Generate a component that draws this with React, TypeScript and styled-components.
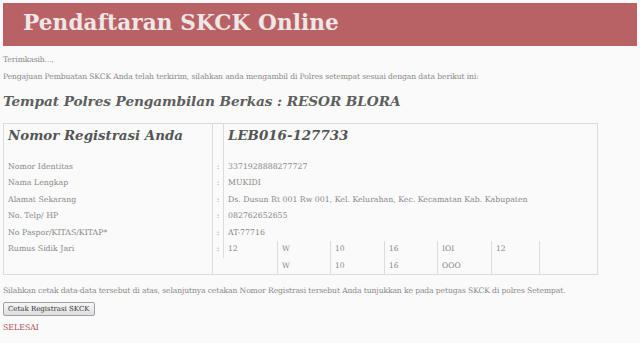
import styled, { createGlobalStyle } from 'styled-components';

const GlobalStyle = createGlobalStyle`
  html, body {
    margin: 0;
    padding: 0;
    background: #fafafa;
  }
  body {
    font-family: "DejaVu Serif", "Liberation Serif", serif;
  }
`;

const Page = styled.div`
  padding: 3px;
  width: 640px;
  height: 343px;
  box-sizing: border-box;
  overflow: hidden;
  color: #888;
  font-size: 8px;
`;

const Header = styled.header`
  height: 43px;
  background: #b86266;
  display: flex;
  align-items: center;
  padding: 0 0 4px 20px;
  box-sizing: border-box;
`;

const Title = styled.h1`
  margin: 0;
  font-family: "DejaVu Serif", serif;
  font-size: 21.6px;
  font-weight: bold;
  color: #efe6e6;
  letter-spacing: 0.1px;
`;

const Text = styled.p<{ $top: number }>`
  margin: ${({ $top }) => $top}px 0 0 0;
  line-height: 10px;
  font-size: 7.6px;
  color: #888;
  letter-spacing: -0.1px;
`;

const PickupTitle = styled.h2`
  margin: 10px 0 0 0;
  font-size: 13.7px;
  line-height: 18px;
  font-style: italic;
  font-weight: bold;
  color: #5e5e5e;
  letter-spacing: -0.1px;
`;

const DataTable = styled.table`
  margin-top: 13px;
  width: 595px;
  border: 1px solid #dcdcdc;
  border-collapse: collapse;
  table-layout: fixed;
`;

const Row = styled.tr<{ $height?: number }>`
  height: ${({ $height }) => $height ?? 16.5}px;
`;

const Cell = styled.td<{ $width?: number }>`
  width: ${({ $width }) => ($width ? `${$width}px` : 'auto')};
  padding: 0 4px;
  border-right: 1px solid #dcdcdc;
  font-size: 7.8px;
  line-height: 16.5px;
  color: #888;
  vertical-align: middle;
  white-space: nowrap;
  overflow: hidden;
  box-sizing: border-box;

  &:last-child {
    border-right: none;
  }
`;

const ColonCell = styled(Cell)`
  padding: 0;
  text-align: center;
`;

const BigCell = styled(Cell)`
  vertical-align: top;
  padding-top: 1px;
  font-size: 13.4px;
  line-height: 20px;
  font-style: italic;
  font-weight: bold;
  color: #555;
`;

const PrintsCell = styled.td`
  padding: 0;
  vertical-align: top;
`;

const PrintsGrid = styled.div`
  display: grid;
  grid-template-columns: 54px 53px 54px 53px 54px 48px 59px;
  grid-auto-rows: 16.5px;
`;

const PrintItem = styled.div`
  padding: 0 4px;
  border-right: 1px solid #dcdcdc;
  font-size: 7.6px;
  line-height: 16.5px;
  color: #888;

  &:nth-child(7n) {
    border-right: none;
  }
`;

const PrintButton = styled.button`
  margin-top: 6px;
  display: block;
  height: 14px;
  padding: 0 4px;
  font-family: "DejaVu Serif", serif;
  font-size: 7px;
  color: #333;
  background: linear-gradient(#f6f6f6, #dedede);
  border: 1px solid #a0a0a0;
  border-radius: 2px;
  cursor: pointer;
`;

const DoneLink = styled.span`
  display: block;
  margin-top: 7px;
  font-size: 7.8px;
  line-height: 10px;
  color: #b04c4e;
  cursor: pointer;
`;

const details = [
  { label: 'Nomor Identitas', value: '3371928888277727' },
  { label: 'Nama Lengkap', value: 'MUKIDI' },
  { label: 'Alamat Sekarang', value: 'Ds. Dusun Rt 001 Rw 001, Kel. Kelurahan, Kec. Kecamatan Kab. Kabupaten' },
  { label: 'No. Telp/ HP', value: '082762652655' },
  { label: 'No Paspor/KITAS/KITAP*', value: 'AT-77716' },
];

const fingerprints = ['12', 'W', '10', '16', 'IOI', '12', '', '', 'W', '10', '16', 'OOO', '', ''];

export default function App() {
  return (
    <>
      <GlobalStyle />
      <Page>
        <Header>
          <Title>Pendaftaran SKCK Online</Title>
        </Header>
        <Text $top={9}>Terimkasih...,</Text>
        <Text $top={7}>
          Pengajuan Pembuatan SKCK Anda telah terkirim, silahkan anda mengambil di Polres setempat sesuai dengan data berikut ini:
        </Text>
        <PickupTitle>Tempat Polres Pengambilan Berkas : RESOR BLORA</PickupTitle>
        <DataTable>
          <tbody>
            <Row $height={35}>
              <BigCell $width={209}>Nomor Registrasi Anda</BigCell>
              <ColonCell $width={11}></ColonCell>
              <BigCell>LEB016-127733</BigCell>
            </Row>
            {details.map((d, i) => (
              <Row key={i}>
                <Cell>{d.label}</Cell>
                <ColonCell>:</ColonCell>
                <Cell>{d.value}</Cell>
              </Row>
            ))}
            <Row>
              <Cell>Rumus Sidik Jari</Cell>
              <ColonCell>:</ColonCell>
              <PrintsCell rowSpan={2}>
                <PrintsGrid>
                  {fingerprints.map((f, i) => (
                    <PrintItem key={i}>{f}</PrintItem>
                  ))}
                </PrintsGrid>
              </PrintsCell>
            </Row>
            <Row>
              <Cell></Cell>
              <ColonCell></ColonCell>
            </Row>
          </tbody>
        </DataTable>
        <Text $top={11}>
          Silahkan cetak data-data tersebut di atas, selanjutnya cetakan Nomor Registrasi tersebut Anda tunjukkan ke pada petugas SKCK di polres Setempat.
        </Text>
        <PrintButton>Cetak Registrasi SKCK</PrintButton>
        <DoneLink>SELESAI</DoneLink>
      </Page>
    </>
  );
}
